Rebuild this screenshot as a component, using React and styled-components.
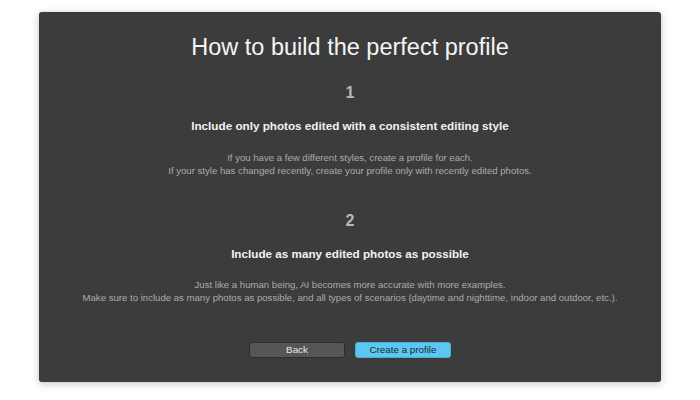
import React from 'react';
import styled, { createGlobalStyle } from 'styled-components';

const Global = createGlobalStyle`
  html, body {
    margin: 0;
    padding: 0;
    background: #ffffff;
    font-family: "Liberation Sans", Arial, sans-serif;
  }
`;

const Page = styled.div`
  width: 700px;
  height: 400px;
  padding-top: 12px;
  box-sizing: border-box;
  display: flex;
  justify-content: center;
`;

const Panel = styled.div`
  width: 622px;
  height: 370px;
  box-sizing: border-box;
  background: #3c3c3c;
  border-radius: 3px;
  box-shadow: 0 2px 8px rgba(0, 0, 0, 0.22), 0 0 1px rgba(0, 0, 0, 0.3);
  padding: 20px 0 0;
  display: flex;
  flex-direction: column;
  align-items: center;
  text-align: center;
`;

const Title = styled.h1`
  margin: 0;
  font-size: 23.5px;
  line-height: 30px;
  font-weight: 400;
  color: #f4f4f4;
`;

const Step = styled.section`
  display: flex;
  flex-direction: column;
  align-items: center;
  margin-top: ${(p) => p.$top}px;
`;

const Number = styled.div`
  font-size: 16px;
  line-height: 20px;
  font-weight: 700;
  color: #b8b8b8;
`;

const Heading = styled.h2`
  margin: 15px 0 0;
  font-size: 11.7px;
  line-height: 16px;
  font-weight: 700;
  color: #f2f2f2;
`;

const Desc = styled.p`
  margin: 16.5px 0 0;
  font-size: 9.6px;
  line-height: 13px;
  color: #ababab;
`;

const Buttons = styled.div`
  display: flex;
  gap: 10px;
  margin-top: 38px;
`;

const Button = styled.button`
  width: 96px;
  height: 16px;
  padding: 0;
  box-sizing: border-box;
  border-radius: 3px;
  font-family: "Liberation Sans", Arial, sans-serif;
  font-size: 9.8px;
  line-height: 14px;
  cursor: pointer;
  background: ${(p) => (p.$primary ? '#5cc7f0' : '#565656')};
  border: 1px solid ${(p) => (p.$primary ? '#4aaed6' : '#2e2e2e')};
  color: ${(p) => (p.$primary ? '#1e2a30' : '#e6e6e6')};
`;

const steps = [
  {
    n: 1,
    title: 'Include only photos edited with a consistent editing style',
    lines: [
      'If you have a few different styles, create a profile for each.',
      'If your style has changed recently, create your profile only with recently edited photos.',
    ],
  },
  {
    n: 2,
    title: 'Include as many edited photos as possible',
    lines: [
      'Just like a human being, AI becomes more accurate with more examples.',
      'Make sure to include as many photos as possible, and all types of scenarios (daytime and nighttime, indoor and outdoor, etc.).',
    ],
  },
];

const App = () => (
  <>
    <Global />
    <Page>
      <Panel>
        <Title>How to build the perfect profile</Title>
        {steps.map((s, i) => (
          <Step key={s.n} $top={i === 0 ? 21 : 34}>
            <Number>{s.n}</Number>
            <Heading>{s.title}</Heading>
            <Desc>
              {s.lines[0]}
              <br />
              {s.lines[1]}
            </Desc>
          </Step>
        ))}
        <Buttons>
          <Button>Back</Button>
          <Button $primary>Create a profile</Button>
        </Buttons>
      </Panel>
    </Page>
  </>
);

export default App;
